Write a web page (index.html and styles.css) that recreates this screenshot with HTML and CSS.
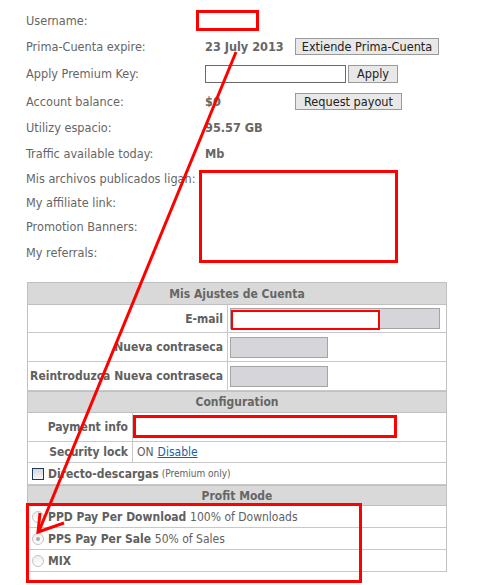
FILE: index.html
```html
<!DOCTYPE html>
<html>
<head>
<meta charset="utf-8">
<link rel="stylesheet" href="styles.css">
</head>
<body>
<div class="page">
  <div class="info">
    <div class="row h26"><span class="lbl">Username:</span><span class="val"></span></div>
    <div class="row h26"><span class="lbl">Prima-Cuenta expire:</span><span class="val"><b class="vtext">23 July 2013</b><button class="btn btn-ext">Extiende Prima-Cuenta</button></span></div>
    <div class="row h29"><span class="lbl">Apply Premium Key:</span><span class="val"><input class="key" type="text"><button class="btn btn-apply">Apply</button></span></div>
    <div class="row h26"><span class="lbl">Account balance:</span><span class="val"><b class="vtext">$0</b><button class="btn btn-pay">Request payout</button></span></div>
    <div class="row h26"><span class="lbl">Utilizy espacio:</span><span class="val"><b>95.57 GB</b></span></div>
    <div class="row h26"><span class="lbl">Traffic available today:</span><span class="val"><b>Mb</b></span></div>
    <div class="row h24"><span class="lbl">Mis archivos publicados ligan:</span><span class="val"></span></div>
    <div class="row h24"><span class="lbl">My affiliate link:</span><span class="val"></span></div>
    <div class="row h25"><span class="lbl">Promotion Banners:</span><span class="val"></span></div>
    <div class="row h26"><span class="lbl">My referrals:</span><span class="val"></span></div>
  </div>

  <div class="panel">
    <div class="sec sec-acct">
      <div class="hd hd-first">Mis Ajustes de Cuenta</div>
      <div class="cell l r28">E-mail</div>
      <div class="cell v r28"><span class="field field-wide"></span></div>
      <div class="cell l r29">Nueva contraseca</div>
      <div class="cell v r29"><span class="field"></span></div>
      <div class="cell l r29">Reintroduzca Nueva contraseca</div>
      <div class="cell v r29"><span class="field"></span></div>
    </div>
    <div class="sec sec-conf">
      <div class="hd hd-conf">Configuration</div>
      <div class="cell l r29">Payment info</div>
      <div class="cell v r29"></div>
      <div class="cell l r21">Security lock</div>
      <div class="cell v r21 plain">ON <a href="#" class="link">Disable</a></div>
      <div class="cell full r22"><span class="check"></span><b class="strong">Directo-descargas</b> <small class="note">(Premium only)</small></div>
    </div>
    <div class="sec sec-profit">
      <div class="hd hd-profit">Profit Mode</div>
      <div class="cell full r22"><span class="radio"></span><b class="strong">PPD Pay Per Download</b>&nbsp;<span class="plain">100% of Downloads</span></div>
      <div class="cell full r22"><span class="radio on"></span><b class="strong">PPS Pay Per Sale</b>&nbsp;<span class="plain">50% of Sales</span></div>
      <div class="cell full r22"><span class="radio"></span><b class="strong">MIX</b></div>
    </div>
  </div>
</div>

<div class="mark m-user"></div>
<div class="mark m-links"></div>
<div class="mark m-email"></div>
<div class="mark m-pay"></div>
<div class="mark m-profit"></div>

<svg class="arrow" width="503" height="585" viewBox="0 0 503 585">
  <line x1="236" y1="52" x2="39" y2="531" stroke="#ff0000" stroke-width="3"/>
  <polyline points="40,513 38,532 64,523" fill="none" stroke="#ff0000" stroke-width="3" stroke-linejoin="miter"/>
</svg>
</body>
</html>
```

FILE: styles.css
```css
html, body {
  margin: 0;
  padding: 0;
  background: #ffffff;
}
body {
  font-family: "DejaVu Sans", Tahoma, sans-serif;
  font-stretch: condensed;
  font-size: 12px;
  color: #666666;
  width: 503px;
  height: 585px;
  position: relative;
  overflow: hidden;
}
.page {
  padding-top: 7px;
}
.info {
  padding-left: 26px;
  font-size: 12.6px;
}
.row {
  display: flex;
  align-items: center;
}
.h24 { height: 24px; }
.h25 { height: 25px; }
.h26 { height: 26px; }
.h29 { height: 29px; }
.lbl {
  width: 179px;
  flex: none;
  white-space: nowrap;
}
.val {
  display: flex;
  align-items: center;
}
.val b {
  font-weight: bold;
  color: #666666;
}
.vtext {
  width: 90px;
  flex: none;
}
.btn {
  font-family: inherit;
  font-stretch: condensed;
  font-size: 12.6px;
  color: #222222;
  background: #e8e8e8;
  border: 1px solid #9a9a9a;
  height: 17px;
  padding: 0;
  margin: 0;
  line-height: 15px;
}
.btn-ext { width: 144px; }
.btn-pay { width: 107px; }
.btn-apply { width: 50px; height: 18px; margin-left: 2px; }
.key {
  width: 141px;
  height: 18px;
  box-sizing: border-box;
  border: 1px solid #6a6a6a;
  margin: 0;
  padding: 0;
  background: #fff;
}

.panel {
  margin-top: 17px;
  margin-left: 27px;
  width: 420px;
  box-sizing: border-box;
  border-left: 1px solid #c0c0c0;
  border-right: 1px solid #c0c0c0;
}
.sec {
  display: grid;
}
.sec-acct { grid-template-columns: 200px 1fr; }
.sec-conf { grid-template-columns: 105px 1fr; }
.sec-profit { grid-template-columns: 1fr; }
.hd {
  grid-column: 1 / -1;
  background: #d9d9d9;
  border-top: 1px solid #c0c0c0;
  border-bottom: 1px solid #c0c0c0;
  text-align: center;
  font-weight: bold;
  color: #666666;
  display: flex;
  align-items: center;
  justify-content: center;
}
.hd-first { height: 21px; }
.hd-conf { height: 20px; }
.hd-profit { height: 19px; }
.cell {
  border-bottom: 1px solid #c8c8c8;
  display: flex;
  align-items: center;
  box-sizing: border-box;
  font-weight: bold;
  color: #606060;
}
.cell.l {
  justify-content: flex-end;
  border-right: 1px solid #c8c8c8;
  padding-right: 4px;
  white-space: nowrap;
}
.cell.v {
  padding-left: 2px;
}
.cell.plain, .plain {
  font-weight: normal;
}
.sec-conf .cell.v { padding-left: 4px; }
.cell.full {
  grid-column: 1 / -1;
  padding-left: 4px;
}
.r21 { height: 21px; }
.r22 { height: 22px; }
.r28 { height: 28px; }
.r29 { height: 29px; }
.field {
  display: block;
  width: 98px;
  height: 21px;
  box-sizing: border-box;
  background: #d6d6da;
  border: 1px solid #a4a4a4;
}
.field-wide { width: 210px; }
.link {
  color: #1a5fa8;
  text-decoration: underline;
  margin-left: 4px;
}
.strong { font-weight: bold; }
.note {
  font-size: 10px;
  font-weight: normal;
  margin-left: 3px;
}
.check {
  width: 12px;
  height: 12px;
  box-sizing: border-box;
  border: 1px solid #1f3a5c;
  background: linear-gradient(#d8d8d8, #f6f6f6);
  margin-right: 4px;
  flex: none;
}
.radio {
  width: 12px;
  height: 12px;
  box-sizing: border-box;
  border: 1px solid #c4c4c4;
  border-radius: 50%;
  background: linear-gradient(#eeeeee, #ffffff);
  margin-right: 4px;
  flex: none;
  position: relative;
}
.radio.on::after {
  content: "";
  position: absolute;
  left: 3px;
  top: 3px;
  width: 4px;
  height: 4px;
  border-radius: 50%;
  background: #a8a8a8;
}

.mark {
  position: absolute;
  border: 3px solid #ff0000;
  box-sizing: border-box;
  background: #ffffff;
}
.m-user { left: 196px; top: 10px; width: 63px; height: 21px; }
.m-links { left: 199px; top: 170px; width: 199px; height: 93px; }
.m-email { left: 231px; top: 310px; width: 149px; height: 20px; border-width: 2px; }
.m-pay { left: 133px; top: 415px; width: 264px; height: 23px; }
.m-profit { left: 26px; top: 503px; width: 336px; height: 80px; background: transparent; }
.arrow {
  position: absolute;
  left: 0;
  top: 0;
  pointer-events: none;
}
```
